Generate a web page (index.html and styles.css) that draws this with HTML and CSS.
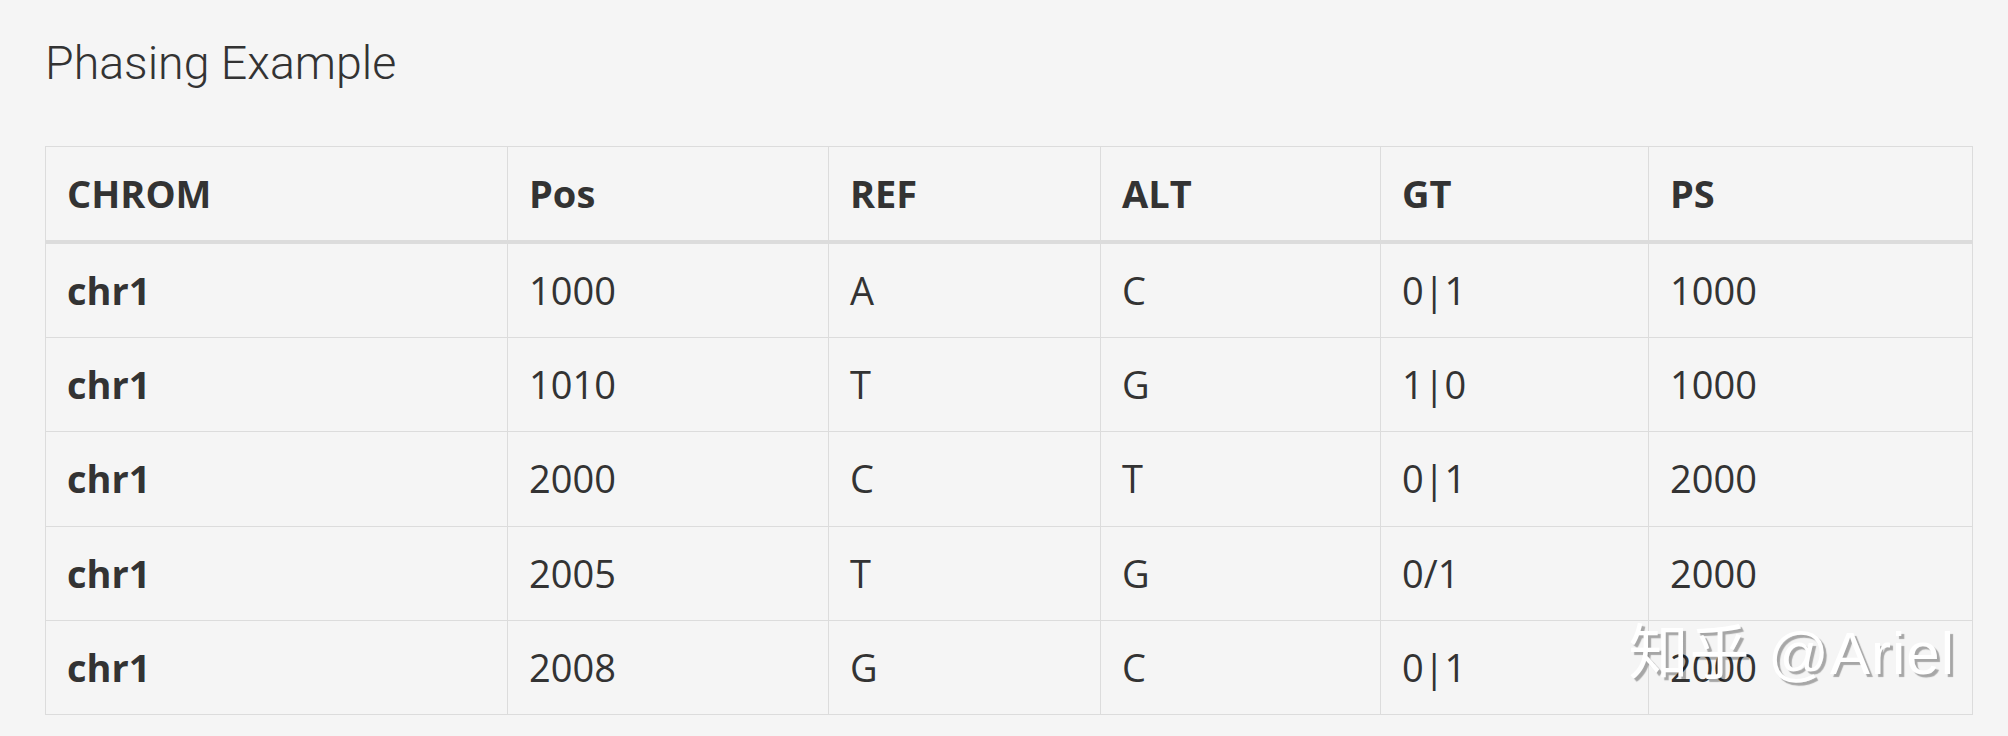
FILE: index.html
```html
<!DOCTYPE html>
<html lang="en">
<head>
<meta charset="utf-8">
<title>Phasing Example</title>
<link rel="stylesheet" href="styles.css">
</head>
<body>
<div class="page">
  <h2 class="title">Phasing Example</h2>
  <table class="grid">
    <colgroup>
      <col class="c-chrom">
      <col class="c-pos">
      <col class="c-ref">
      <col class="c-alt">
      <col class="c-gt">
      <col class="c-ps">
    </colgroup>
    <thead>
      <tr><th>CHROM</th><th>Pos</th><th>REF</th><th>ALT</th><th>GT</th><th>PS</th></tr>
    </thead>
    <tbody>
      <tr><th>chr1</th><td>1000</td><td>A</td><td>C</td><td>0|1</td><td>1000</td></tr>
      <tr><th>chr1</th><td>1010</td><td>T</td><td>G</td><td>1|0</td><td>1000</td></tr>
      <tr><th>chr1</th><td>2000</td><td>C</td><td>T</td><td>0|1</td><td>2000</td></tr>
      <tr><th>chr1</th><td>2005</td><td>T</td><td>G</td><td>0/1</td><td>2000</td></tr>
      <tr><th>chr1</th><td>2008</td><td>G</td><td>C</td><td>0|1</td><td>2000</td></tr>
    </tbody>
  </table>
  <div class="watermark">知乎 @Ariel</div>
</div>
</body>
</html>
```

FILE: styles.css
```css
html, body {
  margin: 0;
  padding: 0;
  background: #f5f5f5;
}

.page {
  position: relative;
  width: 2008px;
  height: 736px;
  box-sizing: border-box;
  padding: 39px 36px 0 45px;
  color: #333;
}

.title {
  margin: 0 0 59px 0;
  font-family: Roboto, "Liberation Sans", sans-serif;
  font-weight: 300;
  font-size: 46.5px;
  line-height: 48px;
  color: #333;
}

.grid {
  width: 1927px;
  table-layout: fixed;
  border-collapse: separate;
  border-spacing: 0;
  border-top: 1px solid #dcdcdc;
  border-left: 1px solid #dcdcdc;
  font-family: "Open Sans", "Liberation Sans", sans-serif;
  font-size: 38px;
  line-height: 57px;
  color: #333;
}

.c-chrom { width: 462px; }
.c-pos { width: 321px; }
.c-ref { width: 272px; }
.c-alt { width: 280px; }
.c-gt { width: 268px; }
.c-ps { width: 324px; }

.grid th,
.grid td {
  padding: 18px 21px 18.2px 21px;
  text-align: left;
  vertical-align: middle;
  border-right: 1px solid #dcdcdc;
  border-bottom: 1px solid #dcdcdc;
}

.grid th {
  font-weight: 700;
}

.grid td {
  font-weight: 400;
}

.grid thead th {
  padding-bottom: 18px;
  border-bottom: 4px solid #dcdcdc;
}

.watermark {
  position: absolute;
  top: 624px;
  right: 53px;
  font-family: "Liberation Sans", "Noto Sans CJK SC", sans-serif;
  font-size: 60px;
  line-height: 60px;
  letter-spacing: 1px;
  color: #ffffff;
  text-shadow: 3px 3px 1px rgba(0, 0, 0, 0.32);
  white-space: nowrap;
}
```
